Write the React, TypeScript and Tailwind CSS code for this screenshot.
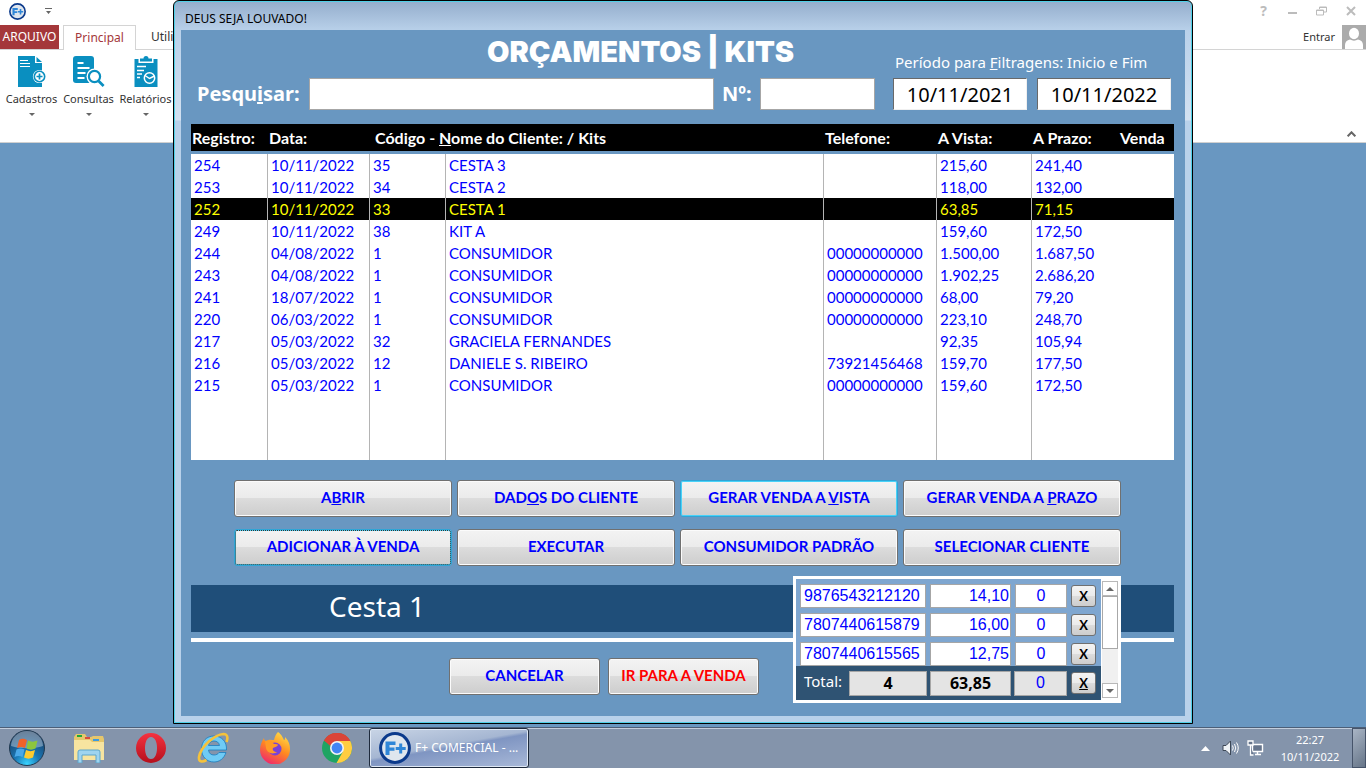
import React, { useState } from 'react';

const rows = [
  { id: '254', date: '10/11/2022', code: '35', name: 'CESTA 3', phone: '', cash: '215,60', term: '241,40' },
  { id: '253', date: '10/11/2022', code: '34', name: 'CESTA 2', phone: '', cash: '118,00', term: '132,00' },
  { id: '252', date: '10/11/2022', code: '33', name: 'CESTA 1', phone: '', cash: '63,85', term: '71,15' },
  { id: '249', date: '10/11/2022', code: '38', name: 'KIT A', phone: '', cash: '159,60', term: '172,50' },
  { id: '244', date: '04/08/2022', code: '1', name: 'CONSUMIDOR', phone: '00000000000', cash: '1.500,00', term: '1.687,50' },
  { id: '243', date: '04/08/2022', code: '1', name: 'CONSUMIDOR', phone: '00000000000', cash: '1.902,25', term: '2.686,20' },
  { id: '241', date: '18/07/2022', code: '1', name: 'CONSUMIDOR', phone: '00000000000', cash: '68,00', term: '79,20' },
  { id: '220', date: '06/03/2022', code: '1', name: 'CONSUMIDOR', phone: '00000000000', cash: '223,10', term: '248,70' },
  { id: '217', date: '05/03/2022', code: '32', name: 'GRACIELA FERNANDES', phone: '', cash: '92,35', term: '105,94' },
  { id: '216', date: '05/03/2022', code: '12', name: 'DANIELE S. RIBEIRO', phone: '73921456468', cash: '159,70', term: '177,50' },
  { id: '215', date: '05/03/2022', code: '1', name: 'CONSUMIDOR', phone: '00000000000', cash: '159,60', term: '172,50' },
];

const items = [
  { code: '9876543212120', price: '14,10', qty: '0' },
  { code: '7807440615879', price: '16,00', qty: '0' },
  { code: '7807440615565', price: '12,75', qty: '0' },
];

const buttonFace =
  'rounded-[3px] border bg-[linear-gradient(#f3f3f3,#ebebeb_48%,#dcdcdc_50%,#cdcdcd)] font-["Lato",sans-serif] font-bold';

function FormButton({ children, look = 'normal', color = 'text-[#0000ff]' }: {
  children: React.ReactNode;
  look?: 'normal' | 'default' | 'focus';
  color?: string;
}) {
  const looks = {
    normal: 'border-[#707070] shadow-[inset_0_0_0_1px_#fbfbfb]',
    default: 'border-[#2fa5d6] shadow-[inset_0_0_0_1px_#48d2f8]',
    focus: 'border-[#2fa5d6] shadow-[inset_0_0_0_1px_#48d2f8] outline-1 outline-dotted outline-[#333] -outline-offset-2',
  };
  return (
    <button type="button" className={`${buttonFace} ${looks[look]} ${color} h-[37px] pb-[2px] text-[15px] whitespace-nowrap`}>
      {children}
    </button>
  );
}

function FPlusLogo({ size }: { size: number }) {
  return (
    <svg width={size} height={size} viewBox="0 0 32 32" aria-hidden="true">
      <circle cx="16" cy="16" r="14.4" fill="#dfe6ee" stroke="#0b3a8c" strokeWidth="3" />
      <path d="M6.500 9.500h10v3.500h-6v2.500h5v3.200h-5v4.300h-4z" fill="#2f86d8" />
      <path d="M20.200 11.500h3v3.500h3.500v3h-3.500v3.500h-3v-3.500h-3.500v-3h3.500z" fill="#2f86d8" />
    </svg>
  );
}

function CadastrosIcon() {
  return (
    <svg width="32" height="32" viewBox="0 0 32 32" aria-hidden="true">
      <path d="M2 0h17v7h7v24H2z" fill="#0a8fc0" />
      <path d="M20.500 1l5.500 5h-5.500z" fill="#0a8fc0" />
      <path d="M4 4.500h8M4 7.500h10M4 10.500h10" stroke="#fff" strokeWidth="1.200" />
      <circle cx="23.500" cy="20.500" r="6.600" fill="#fff" />
      <circle cx="23.500" cy="20.500" r="5.200" fill="#fff" stroke="#0a8fc0" strokeWidth="1.600" />
      <path d="M23.500 17.500v6M20.500 20.500h6" stroke="#0a8fc0" strokeWidth="1.700" />
    </svg>
  );
}

function ConsultasIcon() {
  return (
    <svg width="32" height="32" viewBox="0 0 32 32" aria-hidden="true">
      <path d="M3 0h15a3 3 0 0 1 3 3v24H3a3 3 0 0 1-3-3V3a3 3 0 0 1 3-3z" fill="#0a8fc0" />
      <path d="M4.500 7h6M4.500 12h12M4.500 17h8M4.500 22h7" stroke="#fff" strokeWidth="1.800" />
      <circle cx="21.500" cy="20.500" r="8" fill="#fff" />
      <path d="M25.500 25l5 5" stroke="#fff" strokeWidth="5" />
      <circle cx="21.500" cy="20.500" r="5.600" fill="#fff" stroke="#0a8fc0" strokeWidth="2.200" />
      <path d="M25.600 25l5 5" stroke="#0a8fc0" strokeWidth="2.800" />
    </svg>
  );
}

function RelatoriosIcon() {
  return (
    <svg width="32" height="32" viewBox="0 0 32 32" aria-hidden="true">
      <path d="M4.500 3h4v4h15V3h4v28h-23z" fill="#0a8fc0" />
      <path d="M10 2.500h3.500a2.500 2.500 0 0 1 5 0H22v3H10z" fill="#0a8fc0" />
      <path d="M7 10.500h9M7 14.500h7M7 18h5M7 21.500h3" stroke="#fff" strokeWidth="1.400" />
      <circle cx="19.500" cy="22" r="5.200" fill="#0a8fc0" stroke="#fff" strokeWidth="1.500" />
      <path d="M15 19.500l4.500 3 5-2.500" fill="none" stroke="#fff" strokeWidth="1.400" />
    </svg>
  );
}

function RibbonItem({ label, icon }: { label: string; icon: React.ReactNode }) {
  return (
    <button type="button" className="flex w-[57px] flex-col items-center">
      {icon}
      <span className="mt-[3px] leading-4">{label}</span>
      <svg className="mt-[6px]" width="6" height="3" viewBox="0 0 6 3" aria-hidden="true">
        <path d="M0 0h6L3 3z" fill="#666" />
      </svg>
    </button>
  );
}

function AccessWindow() {
  return (
    <header className="border-b border-[#d0d0d0] bg-white text-[11px] text-[#333]">
      <div className="flex h-[25px] items-center justify-between pr-px pb-[3px] pl-[9px]">
        <div className="flex items-center gap-[19px]">
          <FPlusLogo size={17} />
          <svg width="7" height="6" viewBox="0 0 7 6" aria-hidden="true">
            <path d="M0 0h7v1H0zM1 3h5L3.500 6z" fill="#666" />
          </svg>
        </div>
        <div className="flex items-center text-[#bcbcbc]">
          <button type="button" aria-label="Ajuda" className="w-[29px] text-sm leading-4 font-bold">?</button>
          <button type="button" aria-label="Minimizar" className="flex w-[29px] justify-center">
            <svg width="10" height="10" viewBox="0 0 10 10"><path d="M0 6h9v2H0z" fill="currentColor" /></svg>
          </button>
          <button type="button" aria-label="Restaurar" className="flex w-[29px] justify-center">
            <svg width="11" height="10" viewBox="0 0 11 10">
              <path d="M3.500 3V1h7v5H8M.5 4h7v5h-7zM3.500 1.500h7M.5 4.500h7" fill="none" stroke="currentColor" />
            </svg>
          </button>
          <button type="button" aria-label="Fechar" className="flex w-[29px] justify-center">
            <svg width="10" height="10" viewBox="0 0 10 10"><path d="M1 1l8 8M9 1L1 9" stroke="currentColor" strokeWidth="2" /></svg>
          </button>
        </div>
      </div>
      <div className="flex h-[25px] border-b border-[#d4d4d4]">
        <button type="button" className="w-[59px] bg-[#a4373a] text-xs text-white">ARQUIVO</button>
        <button type="button" className="-mb-px ml-1 w-[73px] border border-b-0 border-[#d4d4d4] bg-white text-xs text-[#a4373a]">
          Principal
        </button>
        <button type="button" className="px-[15px] text-xs">Utilitários</button>
        <button type="button" className="ml-auto pr-[7px]">Entrar</button>
        <svg width="24" height="24" viewBox="0 0 24 24" aria-hidden="true">
          <path d="M0 0h24v24H0z" fill="#ababab" />
          <ellipse cx="12" cy="8.500" rx="5" ry="5.800" fill="#fff" />
          <path d="M3 24v-4c0-3 2-5 5-5.500 2.500 1.500 5.500 1.500 8 0 3 .5 5 2.500 5 5.500v4z" fill="#fff" />
        </svg>
      </div>
      <div className="flex h-[92px] items-start justify-between pt-[6px] pl-[3px]">
        <div className="flex">
          <RibbonItem label="Cadastros" icon={<CadastrosIcon />} />
          <RibbonItem label="Consultas" icon={<ConsultasIcon />} />
          <RibbonItem label="Relatórios" icon={<RelatoriosIcon />} />
        </div>
        <button type="button" aria-label="Recolher" className="self-end pr-[10px] pb-[5px]">
          <svg width="9" height="6" viewBox="0 0 9 6"><path d="M.7 5.300l3.800-4 3.800 4" fill="none" stroke="#666" strokeWidth="2" /></svg>
        </button>
      </div>
    </header>
  );
}

function BudgetTable() {
  const [selected, setSelected] = useState('252');
  const cell = 'border-r border-[#b4b4b4] px-[3px]';
  return (
    <table className="w-full table-fixed border-separate border-spacing-0 text-left font-['Lato',sans-serif] text-[15px] leading-5 whitespace-nowrap">
      <colgroup>
        <col className="w-[77px]" />
        <col className="w-[102px]" />
        <col className="w-[76px]" />
        <col />
        <col className="w-[113px]" />
        <col className="w-[95px]" />
        <col className="w-[87px]" />
        <col className="w-[55px]" />
      </colgroup>
      <thead>
        <tr className="h-[30px] text-base leading-5 text-white [&>th]:border-b-[3px] [&>th]:border-[#6997c1] [&>th]:bg-black [&>th]:pl-px">
          <th>Registro:</th>
          <th>Data:</th>
          <th colSpan={2}><span className="pl-1">Código - <u>N</u>ome do Cliente: / Kits</span></th>
          <th>Telefone:</th>
          <th>A Vista:</th>
          <th>A Prazo:</th>
          <th>Venda</th>
        </tr>
      </thead>
      <tbody className="bg-white text-[#0000ff]">
        {rows.map((row) => (
          <tr
            key={row.id}
            onClick={() => setSelected(row.id)}
            className={`h-[22px] ${selected === row.id ? 'bg-black text-[#ffff00]' : ''}`}
          >
            <td className={cell}>{row.id}</td>
            <td className={cell}>{row.date}</td>
            <td className={cell}>{row.code}</td>
            <td className={cell}>{row.name}</td>
            <td className={cell}>{row.phone}</td>
            <td className={cell}>{row.cash}</td>
            <td className="px-[3px]" colSpan={2}>{row.term}</td>
          </tr>
        ))}
        <tr className="h-16">
          <td className={cell} />
          <td className={cell} />
          <td className={cell} />
          <td className={cell} />
          <td className={cell} />
          <td className={cell} />
          <td colSpan={2} />
        </tr>
      </tbody>
    </table>
  );
}

function ItemsPanel() {
  const field = 'h-6 border border-[#a6a6a6] bg-white pl-[3px] text-base leading-5 text-[#0000ff]';
  const total = 'h-[25px] border border-[#a6a6a6] bg-[#e4e4e4] text-center text-base';
  const remove = `${buttonFace} h-[22px] w-[25px] border-[#707070] text-[13px] leading-4 text-black`;
  return (
    <section className="absolute -top-[9px] right-[53px] flex border-[3px] border-white bg-white font-['Liberation_Sans',sans-serif]">
      <div className="w-[305px]">
        <div className="flex flex-col gap-[5px] bg-[#7ea6d0] pt-[5px]">
          {items.map((item) => (
            <div key={item.code} className="flex items-center gap-1 px-1">
              <input aria-label="Código" className={`${field} w-[126px]`} defaultValue={item.code} />
              <input aria-label="Valor" className={`${field} w-[81px] pr-px text-right`} defaultValue={item.price} />
              <input aria-label="Quantidade" className={`${field} w-[52px] pr-[3px] text-center`} defaultValue={item.qty} />
              <button type="button" className={remove}>X</button>
            </div>
          ))}
        </div>
        <div className="flex h-[34px] items-center gap-[3px] bg-[#2f5373] px-1">
          <span className="w-[46px] pb-1 pl-1 font-['Noto_Sans',sans-serif] text-[15px] text-white">Total:</span>
          <input aria-label="Total de itens" readOnly className={`${total} w-[78px] font-['Noto_Sans',sans-serif] font-bold text-black`} value="4" />
          <input aria-label="Total em valor" readOnly className={`${total} w-[81px] font-['Noto_Sans',sans-serif] font-bold text-black`} value="63,85" />
          <input aria-label="Total adicional" readOnly className={`${total} w-[53px] text-[#0000ff]`} value="0" />
          <button type="button" className={`${remove} ml-px`}><u>X</u></button>
        </div>
      </div>
      <div className="my-[2px] ml-px flex w-4 flex-col bg-[#f0f0f0]">
        <button type="button" aria-label="Subir" className="flex h-[15px] items-center justify-center border border-[#b8b8b8] bg-white">
          <svg width="8" height="4" viewBox="0 0 8 4"><path d="M0 4h8L4 0z" fill="#666" /></svg>
        </button>
        <div className="h-[53px] border border-[#a8a8a8] bg-white" />
        <button type="button" aria-label="Descer" className="mt-auto flex h-[15px] items-center justify-center border border-[#b8b8b8] bg-white">
          <svg width="8" height="4" viewBox="0 0 8 4"><path d="M0 0h8L4 4z" fill="#666" /></svg>
        </button>
      </div>
    </section>
  );
}

function BudgetDialog() {
  const box = 'h-8 min-w-0 border border-[#a6a6a6] bg-white px-2 text-black';
  const dateBox = 'h-8 w-[134px] border border-t-[#696969] border-r-[#f0f0f0] border-b-[#f0f0f0] border-l-[#696969] bg-white text-center text-xl text-black';
  return (
    <div
      role="dialog"
      aria-label="DEUS SEJA LOUVADO!"
      className="absolute inset-x-[173px] top-0 rounded-t-md border border-black bg-[linear-gradient(#94adcc,#b9d1ea_30px,#d3e1f1_119px,#b9d1ea_120px)] shadow-[inset_0_0_0_1px_#4fd0e8]"
    >
      <div className="px-[7px] pb-[7px]">
        <div className="flex h-[29px] items-center pt-[6px] pl-1 text-xs text-black">DEUS SEJA LOUVADO!</div>
        <main className="bg-[#6997c1] pr-[11px] pb-[21px] pl-[10px] text-white">
          <form className="flex items-end gap-[18px] pt-[6px] pr-[3px] pl-[6px]">
            <div className="flex-1">
              <h1 className="pl-[290px] font-['Inter',sans-serif] text-[29px] leading-8 font-black whitespace-nowrap">ORÇAMENTOS | KITS</h1>
              <div className="mt-[10px] flex items-center text-xl font-bold">
                <label htmlFor="search" className="pr-[9px]">Pesqu<u>i</u>sar:</label>
                <input id="search" className={`${box} flex-1`} />
                <label htmlFor="number" className="w-[46px] pl-2">Nº:</label>
                <input id="number" className={`${box} w-[115px]`} />
              </div>
            </div>
            <fieldset>
              <legend className="px-[2px] pb-1 text-[15px] leading-6">Período para <u>F</u>iltragens: Inicio e Fim</legend>
              <div className="flex gap-[10px]">
                <input aria-label="Inicio" className={dateBox} defaultValue="10/11/2021" />
                <input aria-label="Fim" className={dateBox} defaultValue="10/11/2022" />
              </div>
            </fieldset>
          </form>

          <div className="mt-[14px]">
            <BudgetTable />
          </div>

          <div className="mt-5 grid grid-cols-4 gap-x-[5px] gap-y-3 pr-[53px] pl-[43px]">
            <FormButton>A<u>B</u>RIR</FormButton>
            <FormButton>DAD<u>O</u>S DO CLIENTE</FormButton>
            <FormButton look="default">GERAR VENDA A <u>V</u>ISTA</FormButton>
            <FormButton>GERAR VENDA A <u>P</u>RAZO</FormButton>
            <FormButton look="focus">ADICIONAR À VENDA</FormButton>
            <FormButton>EXECUTAR</FormButton>
            <FormButton>CONSUMIDOR PADRÃO</FormButton>
            <FormButton>SELECIONAR CLIENTE</FormButton>
          </div>

          <div className="relative mt-[19px]">
            <h2 className="h-[47px] bg-[#1f4e79] pl-[138px] text-[28px] leading-[42px]">Cesta 1</h2>
            <div className="mt-[6px] h-1 bg-white" />
            <div className="mt-4 grid grid-cols-[151px_151px] gap-2 pl-[258px]">
              <FormButton>CANCELAR</FormButton>
              <FormButton color="text-[#ff0000]">IR PARA A VENDA</FormButton>
            </div>
            <ItemsPanel />
          </div>
        </main>
      </div>
    </div>
  );
}

function StartOrb() {
  return (
    <svg width="38" height="38" viewBox="0 0 38 38" aria-hidden="true">
      <defs>
        <radialGradient id="orb" cx=".5" cy=".95" r=".9">
          <stop offset="0" stopColor="#37d3ff" />
          <stop offset=".4" stopColor="#1a77b5" />
          <stop offset="1" stopColor="#1b3c62" />
        </radialGradient>
      </defs>
      <circle cx="19" cy="19" r="17.500" fill="url(#orb)" stroke="#20384f" />
      <path d="M3 17a16 15 0 0 1 32 0c-9 3-23 3-32 0z" fill="#e4eef5" opacity=".4" />
      <path d="M11 11c3-2 5-1.500 8 0l-2 8c-3-1.500-5-1.500-8 0z" fill="#f0622a" />
      <path d="M20 11.500c3 1.500 6 1.500 9.500 0l-2 8c-3 1.500-6 1.500-9 0z" fill="#8cc63e" />
      <path d="M8.500 20.500c3-1.500 5-1.500 8 0l-2 7.500c-3-1.500-5-1.500-8 0z" fill="#4aa8e8" />
      <path d="M18 21c3 1.500 6 1.500 9 0l-2 7.500c-3 1.500-6 1.500-9 0z" fill="#ffcb2f" />
    </svg>
  );
}

function ExplorerIcon() {
  return (
    <svg width="32" height="30" viewBox="0 0 32 30" aria-hidden="true">
      <path d="M1 4l2-3h9l2 3h4l2-1h10l1 3v21H1z" fill="#e5c66c" />
      <path d="M4 2h5v2H4z" fill="#20a838" />
      <path d="M12 4h5v2h-5z" fill="#d84b3c" />
      <path d="M20 6h6v2h-6z" fill="#3b9be0" />
      <path d="M1 7h16l2 2h12v18H1z" fill="#f7e4a0" />
      <path d="M5 30V19q0-2 2-2h18q2 0 2 2v11h-4v-8H9v8z" fill="#9fd4ef" stroke="#5da6cc" />
    </svg>
  );
}

function OperaIcon() {
  return (
    <svg width="30" height="30" viewBox="0 0 30 30" aria-hidden="true">
      <defs>
        <linearGradient id="opera" x1="0" y1="0" x2="0" y2="1">
          <stop offset="0" stopColor="#f5323f" />
          <stop offset="1" stopColor="#b5101d" />
        </linearGradient>
      </defs>
      <path fillRule="evenodd" d="M15 0a15 15 0 1 0 0 30 15 15 0 0 0 0-30zm0 4c4 0 6 5 6 11s-2 11-6 11-6-5-6-11 2-11 6-11z" fill="url(#opera)" />
    </svg>
  );
}

function ExplorerBrowserIcon() {
  return (
    <svg width="32" height="32" viewBox="0 0 32 32" aria-hidden="true">
      <path
        d="M29.500 18H11.500c.5 3.500 2.500 5 5.500 5 2.500 0 4-1 5-2.500h7C27 26.500 22.500 30 17 30 9.500 30 4.500 24.500 4.500 17S9.500 4 17 4s13 5.500 12.500 14zM22.500 13.500c-.5-3-2.500-4.500-5.500-4.500s-5 1.500-5.500 4.500z"
        fill="#6fcbf5" stroke="#1b7dbf" strokeWidth=".8"
      />
      <path d="M29.500 10c2-5 .5-8-3-8C18 2.500 4 14 2 25c-.5 5 3 5.500 7.500 3" fill="none" stroke="#f5c23b" strokeWidth="2.600" />
    </svg>
  );
}

function FirefoxIcon() {
  return (
    <svg width="32" height="32" viewBox="0 0 32 32" aria-hidden="true">
      <defs>
        <linearGradient id="fox" x1=".8" y1="0" x2=".3" y2="1">
          <stop offset="0" stopColor="#ffe14a" />
          <stop offset=".5" stopColor="#ff8a1f" />
          <stop offset="1" stopColor="#f0286c" />
        </linearGradient>
      </defs>
      <path d="M19 0c4 3 5 6 6 8 1 0 1-1 1-3 4 4 5 8 5 12a15 15 0 0 1-30 1C1 13 3 9 5 6c0 2 1 3 2 3 3-2 6-1 8-1 1-4 2-6 4-8z" fill="url(#fox)" />
      <circle cx="16" cy="17" r="6.500" fill="#7a42d6" />
      <path d="M6 9c4-1 7 0 9 3 2 0 4 0 4 1-1 2-4 2-5 3-1 2 1 4 4 4-4 3-10 1-11-4z" fill="#ff9a26" />
    </svg>
  );
}

function ChromeIcon() {
  return (
    <svg width="30" height="30" viewBox="0 0 30 30" aria-hidden="true">
      <circle cx="15" cy="15" r="15" fill="#1fa463" />
      <path d="M15 15L2 7.500A15 15 0 0 1 28 7.500z" fill="#db4437" />
      <path d="M15 8h13.300A15 15 0 0 1 14.500 30L21 18.500z" fill="#ffcd40" />
      <path d="M2 7.500L8.500 18.500 15 15z" fill="#1fa463" />
      <path d="M15 8A7 7 0 0 0 8.300 13L2 7.500A15 15 0 0 1 28.300 8z" fill="#db4437" />
      <circle cx="15" cy="15" r="7" fill="#f4f4f4" />
      <circle cx="15" cy="15" r="5.400" fill="#4285f4" />
    </svg>
  );
}

function Taskbar() {
  const apps = [
    { label: 'Explorador de Arquivos', icon: <ExplorerIcon /> },
    { label: 'Opera', icon: <OperaIcon /> },
    { label: 'Internet Explorer', icon: <ExplorerBrowserIcon /> },
    { label: 'Firefox', icon: <FirefoxIcon /> },
    { label: 'Chrome', icon: <ChromeIcon /> },
  ];
  return (
    <footer className="flex h-[41px] items-stretch border-t border-[#4c5f78] bg-[#8494ab] text-xs text-white shadow-[inset_0_1px_0_#c3cedd]">
      <button type="button" aria-label="Iniciar" className="flex w-[58px] items-center pl-2"><StartOrb /></button>
      {apps.map((app) => (
        <button key={app.label} type="button" aria-label={app.label} className="flex w-[62px] items-center justify-center">
          {app.icon}
        </button>
      ))}
      <button
        type="button"
        className="ml-px flex w-[160px] items-center gap-1 rounded-[3px] border border-[#1e2a3c] bg-[linear-gradient(170deg,#c9d5e6,#a5b6d2_45%,#7f95c2_50%,#a9b9d8)] pl-[9px] shadow-[inset_0_0_0_1px_#dfe8f4]"
      >
        <FPlusLogo size={32} />
        <span className="whitespace-nowrap">F+ COMERCIAL - ...</span>
      </button>
      <div className="ml-auto flex items-center">
        <svg width="9" height="5" viewBox="0 0 9 5" aria-hidden="true"><path d="M0 5h9L4.500 0z" fill="#fff" /></svg>
        <svg className="ml-3" width="17" height="16" viewBox="0 0 17 16" aria-hidden="true">
          <path d="M1 5.500h3L8.500 1v14L4 10.500H1z" fill="#eef2f6" stroke="#3c4756" />
          <path d="M10.500 5.500q1.500 2.500 0 5M12.500 4q2.500 4 0 8M14.500 2.500q3.500 5.500 0 11" fill="none" stroke="#fff" />
        </svg>
        <svg className="ml-2" width="17" height="16" viewBox="0 0 17 16" aria-hidden="true">
          <path d="M5.500 4.500h10v7h-10zM8 14.500h6M10.500 12v2" fill="#66758c" stroke="#fff" strokeWidth="1.400" />
          <path d="M1 1h5v4H1zM3.500 5v10h3" fill="#66758c" stroke="#fff" strokeWidth="1.300" />
        </svg>
        <div className="ml-4 w-[60px] text-center text-[11px] leading-[17px]">
          <div>22:27</div>
          <div>10/11/2022</div>
        </div>
      </div>
      <button type="button" aria-label="Mostrar área de trabalho" className="ml-3 w-[14px] border border-[#46546a] bg-[linear-gradient(135deg,#a9b5c5,#667588)]" />
    </footer>
  );
}

export default function App() {
  return (
    <div className="relative flex min-h-screen flex-col bg-[#6997c1] font-['Noto_Sans',sans-serif]">
      <AccessWindow />
      <BudgetDialog />
      <div className="mt-auto">
        <Taskbar />
      </div>
    </div>
  );
}
